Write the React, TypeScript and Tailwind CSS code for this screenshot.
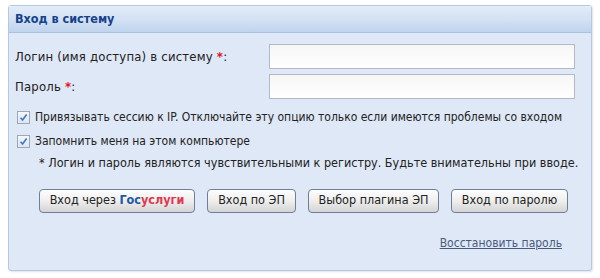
import { useState } from 'react';

const Req = () => <span className="text-[#e0121b] font-bold">*</span>;

const Btn = ({ children, w }: { children: React.ReactNode; w: string }) => (
  <button
    type="button"
    className={`${w} h-[24px] rounded-[4px] border border-[#6f7f95] bg-gradient-to-b from-[#fdfdfd] via-[#eeeeee] to-[#d4d4d4] text-[12.5px] text-[#222] shadow-[inset_0_1px_0_#fff]`}
  >
    {children}
  </button>
);

const Check = ({ checked, onChange, label }: { checked: boolean; onChange: () => void; label: string }) => (
  <label className="flex items-center gap-[5px] cursor-pointer text-[12px]">
    <span
      onClick={onChange}
      className="w-[13px] h-[13px] border border-[#9aa8bd] bg-gradient-to-b from-[#f4f7fb] to-[#dde5ef] flex items-center justify-center"
    >
      {checked && (
        <svg width="9" height="9" viewBox="0 0 9 9">
          <path d="M1.5 4.8 L3.6 7 L7.6 1.6" fill="none" stroke="#3c78c8" strokeWidth="1.6" />
        </svg>
      )}
    </span>
    <span>{label}</span>
  </label>
);

export default function App() {
  const [bindIp, setBindIp] = useState(true);
  const [remember, setRemember] = useState(true);

  return (
    <div className="w-[600px] h-[278px] bg-white pt-[5px] px-[8px] font-['DejaVu_Sans_Condensed',Tahoma,sans-serif] text-[12.5px] text-[#222]">
      <div className="h-[266px] w-[584px] rounded-[3px] border border-[#b5c8e3] bg-[#dfe8f6] shadow-[1px_1px_2px_rgba(0,0,0,0.12)] flex flex-col">
        {/* header */}
        <div className="h-[27px] border-b border-[#a9c0e2] bg-gradient-to-b from-[#e3ecf8] via-[#d5e2f4] to-[#bfd4ee] flex items-center px-[6px]">
          <span className="text-[12.5px] font-bold text-[#15428b]">Вход в систему</span>
        </div>

        <div className="flex flex-col px-[6px] pt-[11px]">
          <div className="flex items-center h-[25px] text-[13px] tracking-[0.2px]">
            <span className="w-[254px]">
              Логин (имя доступа) в систему <Req />:
            </span>
            <input className="w-[306px] h-[25px] border border-[#b5b8c8] bg-gradient-to-b from-[#f6f6f6] to-white outline-none px-1" />
          </div>
          <div className="flex items-center h-[25px] mt-[5px] text-[13px] tracking-[0.2px]">
            <span className="w-[254px]">
              Пароль <Req />:
            </span>
            <input type="password" className="w-[306px] h-[25px] border border-[#b5b8c8] bg-gradient-to-b from-[#f6f6f6] to-white outline-none px-1" />
          </div>

          <div className="mt-[9px] flex flex-col gap-[6px] pl-[2px]">
            <Check
              checked={bindIp}
              onChange={() => setBindIp(!bindIp)}
              label="Привязывать сессию к IP. Отключайте эту опцию только если имеются проблемы со входом"
            />
            <Check checked={remember} onChange={() => setRemember(!remember)} label="Запомнить меня на этом компьютере" />
          </div>

          <div className="mt-[4px] pl-[24px]">
            * Логин и пароль являются чувствительными к регистру. Будьте внимательны при вводе.
          </div>

          <div className="mt-[16px] flex gap-[12px] pl-[24px]">
            <Btn w="w-[156px]">
              Вход через <span className="font-bold text-[#1d5aa3]">Гос</span>
              <span className="font-bold text-[#e0384e]">услуги</span>
            </Btn>
            <Btn w="w-[89px]">Вход по ЭП</Btn>
            <Btn w="w-[131px]">Выбор плагина ЭП</Btn>
            <Btn w="w-[117px]">Вход по паролю</Btn>
          </div>

          <div className="mt-[21px] flex justify-end pr-[23px]">
            <a href="#" className="underline text-[#4a5a7e] text-[12px]">
              Восстановить пароль
            </a>
          </div>
        </div>
      </div>
    </div>
  );
}
